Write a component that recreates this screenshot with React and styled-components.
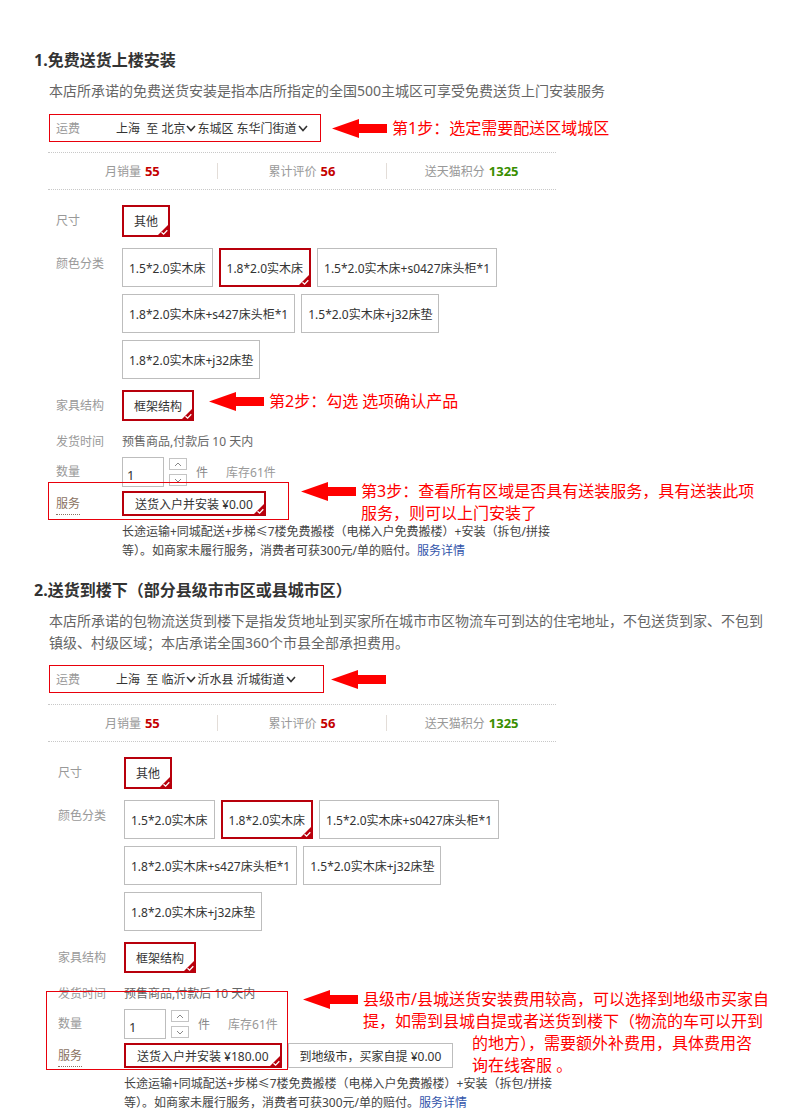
import React from "react";
import styled, { createGlobalStyle } from "styled-components";

const GlobalStyle = createGlobalStyle`
    html, body {
        margin: 0;
        padding: 0;
        background: #fff;
    }
    body {
        font-family: "Noto Sans", "Noto Sans CJK SC", sans-serif;
        font-size: 12px;
        color: #333;
    }
`;

const Page = styled.div`
    width: 790px;
    box-sizing: border-box;
    padding: 48px 0 0 34px;
`;

const Section = styled.section`
    margin-top: ${(p) => p.$mt || 0}px;
`;

const Title = styled.h2`
    margin: 0;
    font-size: 16px;
    line-height: 24px;
    font-weight: 700;
    color: #333;
`;

const Desc = styled.p`
    margin: 8px 0 0 15px;
    width: 722px;
    font-size: 14px;
    line-height: 22px;
    color: #666;
`;

const ShipLine = styled.div`
    display: flex;
    align-items: center;
    margin: ${(p) => p.$mt}px 0 0 15px;
`;

const ShipBox = styled.div`
    display: flex;
    align-items: center;
    box-sizing: border-box;
    width: ${(p) => p.$w}px;
    height: 28px;
    padding-left: 6px;
    border: 1px solid #e8000b;
`;

const ShipLabel = styled.span`
    width: 60px;
    color: #999;
`;

const ShipValue = styled.span`
    display: inline-flex;
    align-items: center;
    color: #333;
    white-space: pre;
`;

const ChevronSvg = styled.svg`
    margin: 0 1px;
`;

const Note = styled.div`
    display: flex;
    align-items: flex-start;
    margin-left: ${(p) => p.$ml}px;
`;

const ArrowBox = styled.div`
    display: flex;
    align-items: center;
    height: 22px;
`;

const NoteText = styled.div`
    margin-left: 5px;
    color: #f00;
    font-size: 16px;
    line-height: 22px;
    white-space: nowrap;
`;

const NoteLine = styled.div`
    padding-left: ${(p) => p.$indent || 0}px;
`;

const Stats = styled.div`
    display: flex;
    align-items: center;
    width: 508px;
    height: 36px;
    margin: ${(p) => p.$mt}px 0 0 14px;
    border-top: 1px dotted #c8c8c8;
    border-bottom: 1px dotted #c8c8c8;
`;

const StatCell = styled.div`
    flex: 1;
    text-align: center;
    color: #999;
`;

const StatDivider = styled.div`
    width: 1px;
    height: 16px;
    background: #e3ddd8;
`;

const StatNum = styled.b`
    margin-left: 4px;
    font-size: 13px;
    font-weight: 700;
    color: ${(p) => p.$c};
`;

const Props = styled.div`
    margin: 15px 0 0 ${(p) => p.$ml}px;
`;

const PropRow = styled.div`
    display: flex;
    align-items: flex-start;
    margin-bottom: ${(p) => (p.$mb === undefined ? 11 : p.$mb)}px;
`;

const PropLabel = styled.div`
    flex: none;
    width: 66px;
    color: ${(p) => (p.$service ? "#8a7262" : "#999")};
    line-height: ${(p) => p.$lh || 32}px;
    span {
        border-bottom: ${(p) => (p.$service ? "1px dotted #8a7262" : "none")};
        padding-bottom: 2px;
    }
`;

const Options = styled.div`
    display: flex;
    flex-wrap: wrap;
    align-items: center;
    gap: 7px 6px;
    max-width: 420px;
`;

const Option = styled.div`
    position: relative;
    display: flex;
    align-items: center;
    box-sizing: border-box;
    height: ${(p) => p.$h}px;
    padding: 0 ${(p) => p.$px}px;
    border: ${(p) => (p.$on ? "2px solid #b8000c" : "1px solid #bdbdbd")};
    color: #333;
    white-space: nowrap;
`;

const Corner = styled.svg`
    position: absolute;
    right: -1px;
    bottom: -1px;
`;

const Info = styled.div`
    color: #666;
    line-height: 20px;
`;

const QtyWrap = styled.div`
    display: flex;
    align-items: center;
    height: 30px;
`;

const QtyInput = styled.div`
    display: flex;
    align-items: center;
    box-sizing: border-box;
    width: 42px;
    height: 30px;
    padding: 5px 0 0 4px;
    border: 1px solid #bdbdbd;
    color: #333;
    font-size: 13px;
`;

const Spinner = styled.div`
    display: flex;
    flex-direction: column;
    gap: 4px;
    margin-left: 5px;
`;

const SpinBtn = styled.div`
    display: flex;
    align-items: center;
    justify-content: center;
    box-sizing: border-box;
    width: 18px;
    height: 12px;
    border: 1px solid #c4c4c4;
`;

const Unit = styled.span`
    margin-left: 9px;
    color: #888;
`;

const Stock = styled.span`
    margin-left: 18px;
    color: #999;
`;

const Marked = styled.div`
    position: relative;
`;

const Frame = styled.div`
    position: absolute;
    top: ${(p) => p.$top}px;
    left: ${(p) => p.$left}px;
    width: ${(p) => p.$w}px;
    height: ${(p) => p.$h}px;
    border: 1px solid #e8000b;
    box-sizing: border-box;
    pointer-events: none;
`;

const FloatNote = styled(Note)`
    position: absolute;
    top: ${(p) => p.$top}px;
    left: ${(p) => p.$left}px;
    margin: 0;
`;

const ServiceDesc = styled.div`
    margin: 0 0 0 66px;
    width: 435px;
    line-height: 19px;
    color: #444;
    a {
        color: #3355aa;
        text-decoration: none;
    }
`;

const Chevron = () => (
    <ChevronSvg width="10" height="7" viewBox="0 0 10 7">
        <polyline
            points="1,1 5,5.5 9,1"
            fill="none"
            stroke="#333"
            strokeWidth="1.6"
        />
    </ChevronSvg>
);

const Arrow = () => (
    <svg width="55" height="19" viewBox="0 0 55 19">
        <polygon
            points="0,9.5 27,0 27,5 55,5 55,14 27,14 27,19"
            fill="#f00"
        />
    </svg>
);

const Check = () => (
    <Corner width="12" height="12" viewBox="0 0 12 12">
        <polygon points="12,0 12,12 0,12" fill="#b8000c" />
        <polyline
            points="4.5,8.2 6.6,10.2 10.3,6.3"
            fill="none"
            stroke="#fff"
            strokeWidth="1.3"
        />
    </Corner>
);

const SpinIcon = ({ up }) => (
    <svg width="8" height="5" viewBox="0 0 8 5">
        <polyline
            points={up ? "1,4 4,1 7,4" : "1,1 4,4 7,1"}
            fill="none"
            stroke="#888"
            strokeWidth="1"
        />
    </svg>
);

const colorOptions = [
    { t: "1.5*2.0实木床" },
    { t: "1.8*2.0实木床", on: true },
    { t: "1.5*2.0实木床+s0427床头柜*1" },
    { t: "1.8*2.0实木床+s427床头柜*1" },
    { t: "1.5*2.0实木床+j32床垫" },
    { t: "1.8*2.0实木床+j32床垫" },
];

const sections = [
    {
        title: "1.免费送货上楼安装",
        desc: "本店所承诺的免费送货安装是指本店所指定的全国500主城区可享受免费送货上门安装服务",
        ship: ["上海", "北京", "东城区 东华门街道"],
        shipW: 272,
        shipMt: 12,
        arrowGap: 11,
        shipNote: "第1步：选定需要配送区域城区",
        statsMt: 10,
        propsMl: 22,
        structNote: "第2步：勾选 选项确认产品",
        services: [{ t: "送货入户并安装 ¥0.00", on: true }],
        markAll: false,
        frame: { top: -9, left: -8, w: 241, h: 38 },
        note: { top: -11, left: 245 },
        noteLines: [
            { t: "第3步：查看所有区域是否具有送装服务，具有送装此项" },
            { t: "服务，则可以上门安装了" },
        ],
    },
    {
        mt: 18,
        title: "2.送货到楼下（部分县级市市区或县城市区）",
        desc: "本店所承诺的包物流送货到楼下是指发货地址到买家所在城市市区物流车可到达的住宅地址，不包送货到家、不包到镇级、村级区域；本店承诺全国360个市县全部承担费用。",
        ship: ["上海", "临沂", "沂水县 沂城街道"],
        shipW: 275,
        shipMt: 11,
        arrowGap: 7,
        statsMt: 11,
        propsMl: 24,
        services: [
            { t: "送货入户并安装 ¥180.00", on: true },
            { t: "到地级市，买家自提 ¥0.00" },
        ],
        markAll: true,
        frame: { top: 7, left: -12, w: 242, h: 79 },
        note: { top: 4, left: 245 },
        noteLines: [
            { t: "县级市/县城送货安装费用较高，可以选择到地级市买家自" },
            { t: "提，如需到县城自提或者送货到楼下（物流的车可以开到" },
            { t: "的地方），需要额外补费用，具体费用咨", indent: 109 },
            { t: "询在线客服 。", indent: 109 },
        ],
    },
];

function DeliverySection({ s }) {
    const timeRow = (
        <PropRow $mb={5}>
            <PropLabel $lh={20}>发货时间</PropLabel>
            <Info>预售商品,付款后 10 天内</Info>
        </PropRow>
    );
    const qtyRow = (
        <PropRow $mb={4}>
            <PropLabel $lh={30}>数量</PropLabel>
            <QtyWrap>
                <QtyInput>1</QtyInput>
                <Spinner>
                    <SpinBtn>
                        <SpinIcon up />
                    </SpinBtn>
                    <SpinBtn>
                        <SpinIcon />
                    </SpinBtn>
                </Spinner>
                <Unit>件</Unit>
                <Stock>库存61件</Stock>
            </QtyWrap>
        </PropRow>
    );
    const serviceRow = (
        <PropRow $mb={6}>
            <PropLabel $lh={25} $service>
                <span>服务</span>
            </PropLabel>
            <Options>
                {s.services.map((o) => (
                    <Option key={o.t} $h={25} $px={11} $on={o.on}>
                        {o.t}
                        {o.on && <Check />}
                    </Option>
                ))}
            </Options>
        </PropRow>
    );
    const overlay = (
        <>
            <Frame
                $top={s.frame.top}
                $left={s.frame.left}
                $w={s.frame.w}
                $h={s.frame.h}
            />
            <FloatNote $top={s.note.top} $left={s.note.left}>
                <ArrowBox>
                    <Arrow />
                </ArrowBox>
                <NoteText>
                    {s.noteLines.map((l) => (
                        <NoteLine key={l.t} $indent={l.indent}>
                            {l.t}
                        </NoteLine>
                    ))}
                </NoteText>
            </FloatNote>
        </>
    );

    return (
        <Section $mt={s.mt}>
            <Title>{s.title}</Title>
            <Desc>{s.desc}</Desc>
            <ShipLine $mt={s.shipMt}>
                <ShipBox $w={s.shipW}>
                    <ShipLabel>运费</ShipLabel>
                    <ShipValue>
                        {s.ship[0]}  至 {s.ship[1]}
                        <Chevron />
                        {s.ship[2]}
                        <Chevron />
                    </ShipValue>
                </ShipBox>
                <Note $ml={s.arrowGap}>
                    <ArrowBox>
                        <Arrow />
                    </ArrowBox>
                    {s.shipNote && <NoteText>{s.shipNote}</NoteText>}
                </Note>
            </ShipLine>
            <Stats $mt={s.statsMt}>
                <StatCell>
                    月销量<StatNum $c="#c40000">55</StatNum>
                </StatCell>
                <StatDivider />
                <StatCell>
                    累计评价<StatNum $c="#c40000">56</StatNum>
                </StatCell>
                <StatDivider />
                <StatCell>
                    送天猫积分<StatNum $c="#3a8e00">1325</StatNum>
                </StatCell>
            </Stats>
            <Props $ml={s.propsMl}>
                <PropRow>
                    <PropLabel>尺寸</PropLabel>
                    <Options>
                        <Option $h={32} $px={10} $on>
                            其他
                            <Check />
                        </Option>
                    </Options>
                </PropRow>
                <PropRow>
                    <PropLabel>颜色分类</PropLabel>
                    <Options>
                        {colorOptions.map((o) => (
                            <Option key={o.t} $h={39} $px={6} $on={o.on}>
                                {o.t}
                                {o.on && <Check />}
                            </Option>
                        ))}
                    </Options>
                </PropRow>
                <PropRow>
                    <PropLabel $lh={31}>家具结构</PropLabel>
                    <Options>
                        <Option $h={31} $px={10} $on>
                            框架结构
                            <Check />
                        </Option>
                    </Options>
                    {s.structNote && (
                        <Note $ml={15}>
                            <ArrowBox>
                                <Arrow />
                            </ArrowBox>
                            <NoteText>{s.structNote}</NoteText>
                        </Note>
                    )}
                </PropRow>
                {s.markAll ? (
                    <Marked>
                        {timeRow}
                        {qtyRow}
                        {serviceRow}
                        {overlay}
                    </Marked>
                ) : (
                    <>
                        {timeRow}
                        {qtyRow}
                        <Marked>
                            {serviceRow}
                            {overlay}
                        </Marked>
                    </>
                )}
                <ServiceDesc>
                    <span>
                        长途运输+同城配送+步梯≤7楼免费搬楼（电梯入户免费搬楼）+安装（拆包/拼接等）。如商家未履行服务，消费者可获300元/单的赔付。
                    </span>
                    <a href="#">服务详情</a>
                </ServiceDesc>
            </Props>
        </Section>
    );
}

export default function App() {
    return (
        <>
            <GlobalStyle />
            <Page>
                {sections.map((s) => (
                    <DeliverySection key={s.title} s={s} />
                ))}
            </Page>
        </>
    );
}
